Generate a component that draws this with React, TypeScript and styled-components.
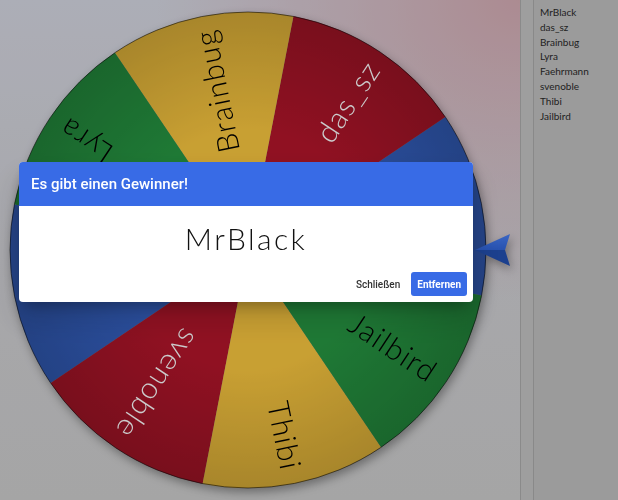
import styled, { createGlobalStyle } from "styled-components";

const GlobalStyle = createGlobalStyle`
  html, body {
    margin: 0;
    padding: 0;
    height: 100%;
  }
  body {
    font-family: "Lato", "Open Sans", sans-serif;
    overflow: hidden;
  }
`;

const players = ["MrBlack", "das_sz", "Brainbug", "Lyra", "Faehrmann", "svenoble", "Thibi", "Jailbird"];

const palette = [
  { fill: "#3663c6", text: "#ffffff" },
  { fill: "#b4162b", text: "#ffffff" },
  { fill: "#fbc840", text: "#000000" },
  { fill: "#279843", text: "#000000" },
];

const CX = 248;
const CY = 250;
const R = 238;

const Page = styled.div`
  display: flex;
  width: 618px;
  height: 500px;
`;

const Stage = styled.main`
  flex: none;
  width: 520px;
  height: 500px;
  background:
    radial-gradient(ellipse 70% 60% at 100% 0%, rgba(215, 172, 180, 0.95), rgba(215, 172, 180, 0) 100%),
    linear-gradient(180deg, #d8dae5 0%, #d2d2d7 50%, #cfcfcf 100%);
`;

const WheelSvg = styled.svg`
  display: block;
  overflow: visible;
  filter: drop-shadow(2px 4px 5px rgba(0, 0, 0, 0.35));
`;

const Label = styled.text`
  font-family: "Lato", "Open Sans", sans-serif;
  font-weight: 300;
  font-size: 30px;
  letter-spacing: 1.2px;
`;

const Sidebar = styled.aside`
  flex: 1;
  display: flex;
  background: #c2c2c2;
  border-left: 1px solid #adadad;
`;

const Gutter = styled.div`
  width: 12px;
  background: #c6c6c6;
  border-right: 1px solid #acacac;
`;

const PlayerList = styled.ul`
  list-style: none;
  margin: 0;
  padding: 5px 0 0 6px;
  font-family: "Lato", "Open Sans", sans-serif;
  font-size: 10px;
  line-height: 14.8px;
  color: #2a2a2a;
`;

const Overlay = styled.div`
  position: fixed;
  inset: 0;
  background: rgba(0, 0, 0, 0.2);
  padding: 162px 0 0 19px;
  box-sizing: border-box;
`;

const Dialog = styled.section`
  width: 454px;
  height: 140px;
  background: #fff;
  border-radius: 4px;
  overflow: hidden;
  display: flex;
  flex-direction: column;
  box-shadow: 0 8px 14px -6px rgba(0, 0, 0, 0.3), 0 16px 30px 2px rgba(0, 0, 0, 0.14);
`;

const Header = styled.header`
  height: 44px;
  flex: none;
  display: flex;
  align-items: center;
  padding: 0 12px;
  background: #386be6;
  color: #fff;
  font-family: Roboto, "Liberation Sans", sans-serif;
  font-weight: 500;
  font-size: 15px;
`;

const Winner = styled.div`
  padding-top: 12px;
  text-align: center;
  font-family: "Lato", "Open Sans", sans-serif;
  font-weight: 300;
  font-size: 30px;
  letter-spacing: 2.4px;
  line-height: 40px;
  color: #111;
`;

const Actions = styled.div`
  margin-top: 14px;
  display: flex;
  justify-content: flex-end;
  gap: 5px;
  padding: 0 6px 6px;
`;

const Button = styled.button<{ $primary?: boolean }>`
  height: 24px;
  padding: 0 6px;
  border: none;
  border-radius: 3px;
  font-family: Roboto, "Liberation Sans", sans-serif;
  font-weight: ${(p) => (p.$primary ? 700 : 500)};
  font-size: 10px;
  background: ${(p) => (p.$primary ? "#386be6" : "transparent")};
  color: ${(p) => (p.$primary ? "#fff" : "#333")};
`;

const pt = (deg: number, r: number) => {
  const a = (deg * Math.PI) / 180;
  return [CX + r * Math.sin(a), CY - r * Math.cos(a)];
};

const Wheel = () => (
  <WheelSvg width={512} height={500} viewBox="0 0 512 500">
    <defs>
      <radialGradient id="shade" cx={CX} cy={CY} r={R} gradientUnits="userSpaceOnUse">
        <stop offset="0.5" stopColor="#000" stopOpacity="0" />
        <stop offset="1" stopColor="#000" stopOpacity="0.16" />
      </radialGradient>
      <linearGradient id="dartTop" x1="0" y1="0" x2="0" y2="1">
        <stop offset="0" stopColor="#4a80f5" />
        <stop offset="1" stopColor="#3166dc" />
      </linearGradient>
    </defs>
    {players.map((name, i) => {
      const mid = 78.5 - 45 * i;
      const [x1, y1] = pt(mid - 22.5, R);
      const [x2, y2] = pt(mid + 22.5, R);
      return (
        <path
          key={name}
          d={`M${CX} ${CY} L${x1} ${y1} A${R} ${R} 0 0 1 ${x2} ${y2} Z`}
          fill={palette[i % 4].fill}
        />
      );
    })}
    <circle cx={CX} cy={CY} r={R} fill="url(#shade)" stroke="rgba(0,0,0,0.55)" strokeWidth={1} />
    {players.map((name, i) => {
      const mid = 78.5 - 45 * i;
      return (
        <Label
          key={name}
          x={CX + 224}
          y={CY}
          textAnchor="end"
          dominantBaseline="central"
          fill={palette[i % 4].text}
          transform={`rotate(${mid - 90} ${CX} ${CY})`}
        >
          {name}
        </Label>
      );
    })}
    <polygon points="475,250 510,234 505,250" fill="url(#dartTop)" />
    <polygon points="475,250 505,250 510,266" fill="#2350b2" />
  </WheelSvg>
);

export default function App() {
  return (
    <>
      <GlobalStyle />
      <Page>
        <Stage>
          <Wheel />
        </Stage>
        <Sidebar>
          <Gutter />
          <PlayerList>
            {players.map((p) => (
              <li key={p}>{p}</li>
            ))}
          </PlayerList>
        </Sidebar>
      </Page>
      <Overlay>
        <Dialog>
          <Header>Es gibt einen Gewinner!</Header>
          <Winner>MrBlack</Winner>
          <Actions>
            <Button>Schließen</Button>
            <Button $primary>Entfernen</Button>
          </Actions>
        </Dialog>
      </Overlay>
    </>
  );
}
